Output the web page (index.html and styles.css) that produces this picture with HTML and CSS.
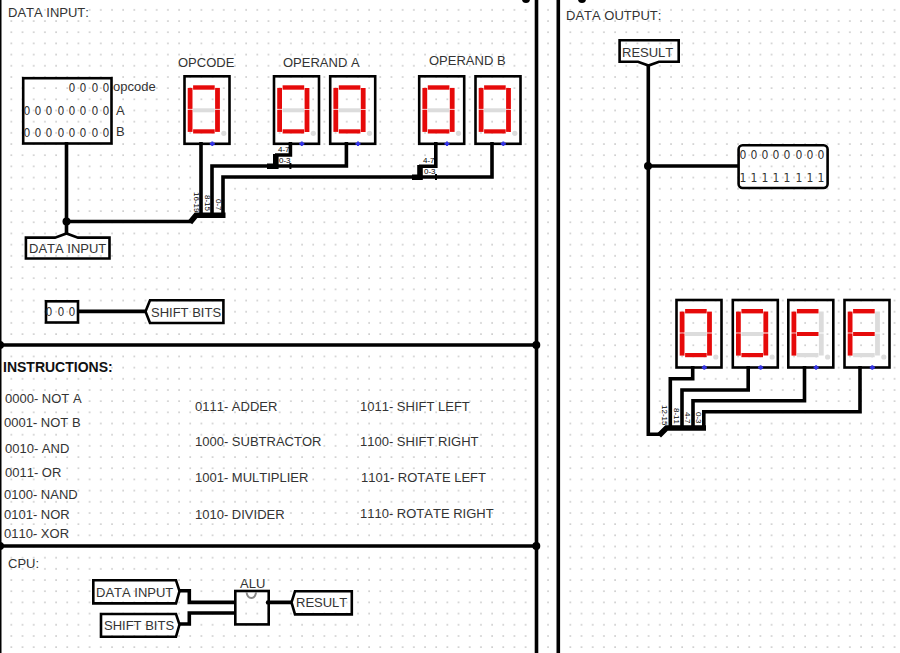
FILE: index.html
```html
<!DOCTYPE html>
<html lang="en">
<head>
<meta charset="utf-8">
<meta name="viewport" content="width=device-width, initial-scale=1">
<title>CPU circuit</title>
<link rel="stylesheet" href="styles.css">
</head>
<body>
<main>
<svg class="circuit" viewBox="0 0 900 653" role="img" aria-label="CPU circuit diagram">
  <defs>
    <pattern id="grid" width="10" height="10" patternUnits="userSpaceOnUse" patternTransform="translate(5.7 15.4) scale(1.118)">
      <rect class="grid-dot" x="4.6" y="4.6" width="0.9" height="0.9"/>
    </pattern>
    <g id="case">
      <rect class="box" x="0" y="0" width="45" height="67.5"/>
      <circle class="off" cx="39.3" cy="57" r="2.6"/>
    </g>
    <path id="enable" d="M25.3 67.5h5M27.8 65.3v4.4"/>
    <path id="seg-a" d="M8.6 9h21.6v4.4H8.6z"/>
    <path id="seg-b" d="M30.6 11.6h4.8v21h-4.8z"/>
    <path id="seg-c" d="M30.6 33.4h4.8v22.2h-4.8z"/>
    <path id="seg-d" d="M8.6 53h21.6v4.2H8.6z"/>
    <path id="seg-e" d="M3.2 33.4h4.8v22.2H3.2z"/>
    <path id="seg-f" d="M3.2 11.6h4.8v21H3.2z"/>
    <path id="seg-g" d="M8.6 32h21.6v4H8.6z"/>
    <g id="digit-0">
      <use href="#case"/>
      <use href="#seg-g" class="off"/>
      <g class="on"><use href="#seg-a"/><use href="#seg-b"/><use href="#seg-c"/><use href="#seg-d"/><use href="#seg-e"/><use href="#seg-f"/></g>
      <use href="#enable" class="enable"/>
    </g>
    <g id="digit-f">
      <use href="#case"/>
      <g class="off"><use href="#seg-b"/><use href="#seg-c"/><use href="#seg-d"/></g>
      <g class="on"><use href="#seg-a"/><use href="#seg-e"/><use href="#seg-f"/><use href="#seg-g"/></g>
      <use href="#enable" class="enable"/>
    </g>
  </defs>

  <rect width="900" height="653" fill="url(#grid)"/>

  <!-- Section frames -->
  <g class="wire">
    <path class="edge" d="M0.5 0V653"/>
    <path d="M536.5 0V653M558.3 0V653M0 345H536M0 546H536"/>
  </g>
  <g class="node">
    <circle cx="526" cy="-1" r="4"/><circle cx="582" cy="-1" r="4"/>
    <circle cx="0" cy="345" r="4"/><circle cx="536.3" cy="345" r="4"/>
    <circle cx="0" cy="546" r="4"/><circle cx="536.3" cy="546" r="4"/>
  </g>

  <!-- Data input -->
  <text x="8" y="17">DATA INPUT:</text>
  <rect class="box" x="23.2" y="78.2" width="88.3" height="65.3"/>
  <g class="bits">
    <text x="72 83 95 106" y="92">0000</text>
    <text x="27 38 49 61 72 83 95 106" y="115">00000000</text>
    <text x="27 38 49 61 72 83 95 106" y="137">00000000</text>
  </g>
  <text x="113" y="91">opcode</text>
  <text x="116" y="115">A</text>
  <text x="116" y="136">B</text>
  <path class="box" d="M25.9 237.6H55L66.5 233.5L78 237.6H109.5V258.5H25.9z"/>
  <text x="29" y="253">DATA INPUT</text>

  <text x="178" y="67">OPCODE</text>
  <text x="283" y="67">OPERAND A</text>
  <text x="429" y="65">OPERAND B</text>
  <use href="#digit-0" x="184.5" y="76.3"/>
  <use href="#digit-0" x="274" y="76.3"/>
  <use href="#digit-0" x="330.2" y="76.3"/>
  <use href="#digit-0" x="419.2" y="76.3"/>
  <use href="#digit-0" x="475.5" y="76.3"/>

  <g class="wire">
    <path d="M66.5 142V234M66.5 221.5H191M201 142V214M212 214V166H346.4V142M223 214V177H492V142"/>
    <path d="M275 155H290.4V142M419 166.3H435.8V142"/>
    <path class="bus" d="M190 222.5L196 215.3H225.5"/>
    <path class="bus" d="M267 166.3H278M275.8 154V169M412 177.3H422.7M420 165V180"/>
    <path class="tick" d="M290.4 163V169M436 174V180"/>
  </g>
  <circle class="node" cx="66.5" cy="221.5" r="4"/>
  <g class="range">
    <text x="278" y="152">4-7</text><text x="279" y="163">0-3</text>
    <text x="423" y="163">4-7</text><text x="424" y="174">0-3</text>
    <text transform="translate(194 192) rotate(90)">16-19</text>
    <text transform="translate(205 195) rotate(90)">8-15</text>
    <text transform="translate(216 199) rotate(90)">0-7</text>
  </g>

  <!-- Shift bits -->
  <rect class="box" x="46" y="301.3" width="32" height="21.2"/>
  <g class="bits"><text x="49 61 72" y="316">000</text></g>
  <path class="wire" d="M77 311.4H145"/>
  <path class="box" d="M145.5 311.4L150 300.3H223.4V323H150z"/>
  <text x="151" y="317">SHIFT BITS</text>

  <!-- Instructions -->
  <text class="heading" x="3" y="372">INSTRUCTIONS:</text>
  <text x="5" y="403">0000- NOT A</text>
  <text x="4" y="427">0001- NOT B</text>
  <text x="5" y="453">0010- AND</text>
  <text x="5" y="477">0011- OR</text>
  <text x="4" y="499">0100- NAND</text>
  <text x="4" y="519">0101- NOR</text>
  <text x="4" y="538">0110- XOR</text>
  <text x="195" y="411">0111- ADDER</text>
  <text x="195" y="446">1000- SUBTRACTOR</text>
  <text x="195" y="482">1001- MULTIPLIER</text>
  <text x="195" y="519">1010- DIVIDER</text>
  <text x="360" y="411">1011- SHIFT LEFT</text>
  <text x="360" y="446">1100- SHIFT RIGHT</text>
  <text x="361" y="482">1101- ROTATE LEFT</text>
  <text x="360" y="518">1110- ROTATE RIGHT</text>

  <!-- CPU -->
  <text x="8" y="568">CPU:</text>
  <path class="box" d="M93.3 580.3H176L179.5 591L176 603.4H93.3z"/>
  <text x="96" y="597">DATA INPUT</text>
  <path class="box" d="M101 614H176L179.5 624.5L176 636.7H101z"/>
  <text x="104" y="630">SHIFT BITS</text>
  <path class="wire" d="M179 590.7H189.3V602.4H235M179 624H189.3V613H235M268 602.4H291"/>
  <rect class="box" x="235.3" y="591" width="33.4" height="33.4"/>
  <path class="notch" d="M246.5 592c1 8 8.6 8 9.6 0"/>
  <circle class="node" cx="268" cy="602.4" r="2.2"/>
  <text x="240" y="588">ALU</text>
  <path class="box" d="M291.5 602.4L295 591.3H351.8V614.4H295z"/>
  <text x="296" y="607">RESULT</text>

  <!-- Data output -->
  <text x="566" y="20">DATA OUTPUT:</text>
  <path class="box" d="M619.6 40.3H678.7V61.8H659L648.5 65.5L638 61.8H619.6z"/>
  <text x="622" y="57">RESULT</text>
  <path class="wire" d="M648.3 65V434.2H660M648.3 166H738"/>
  <circle class="node" cx="648" cy="166" r="4"/>
  <rect class="box" x="738.6" y="145.3" width="89" height="42.7" rx="4"/>
  <g class="bits">
    <text x="743 754 765 776 787 799 810 821" y="159">00000000</text>
    <text x="743 754 765 776 787 799 810 821" y="182">11111111</text>
  </g>
  <use href="#digit-0" x="676.5" y="300"/>
  <use href="#digit-0" x="732.8" y="300"/>
  <use href="#digit-f" x="788.3" y="300"/>
  <use href="#digit-f" x="844.5" y="300"/>
  <g class="wire">
    <path d="M670.3 428V378.7H692.7V366M682 428V390H748.2V366M693 428V400.7H804.5V366M703.8 428V411.7H860V366"/>
    <path class="bus" d="M659 435.5L666.5 428H706"/>
  </g>
  <g class="range">
    <text transform="translate(662 405) rotate(90)">12-15</text>
    <text transform="translate(674 408) rotate(90)">8-11</text>
    <text transform="translate(685 412) rotate(90)">4-7</text>
    <text transform="translate(696 412) rotate(90)">0-3</text>
  </g>
</svg>
</main>
</body>
</html>
```
FILE: styles.css
```css
body {
  margin: 0;
  background: #fff;
  font-family: "Liberation Sans", Arial, sans-serif;
}

.circuit {
  display: block;
  width: 100%;
  height: auto;
  font-size: 13px;
  font-kerning: none;
  fill: #333;
}

.grid-dot { fill: #777; }

.box {
  fill: none;
  stroke: #000;
  stroke-width: 2.6;
}

.wire {
  fill: none;
  stroke: #000;
  stroke-width: 3.6;
}

.edge { stroke-width: 2; }
.bus { stroke-width: 5.6; }
.tick { stroke-width: 2; }
.node { fill: #000; }

.notch {
  fill: none;
  stroke: #888;
  stroke-width: 2;
}

.on { fill: #e60a0a; }
.off { fill: #dcdcdc; }

.enable {
  fill: none;
  stroke: #33e;
  stroke-width: 2;
}

.heading {
  font-size: 14px;
  font-weight: bold;
  fill: #111;
}

.bits {
  font-family: "DejaVu Sans Condensed", "DejaVu Sans", sans-serif;
  font-size: 12px;
  text-anchor: middle;
}

.range {
  font-size: 8px;
  fill: #000;
}
```
